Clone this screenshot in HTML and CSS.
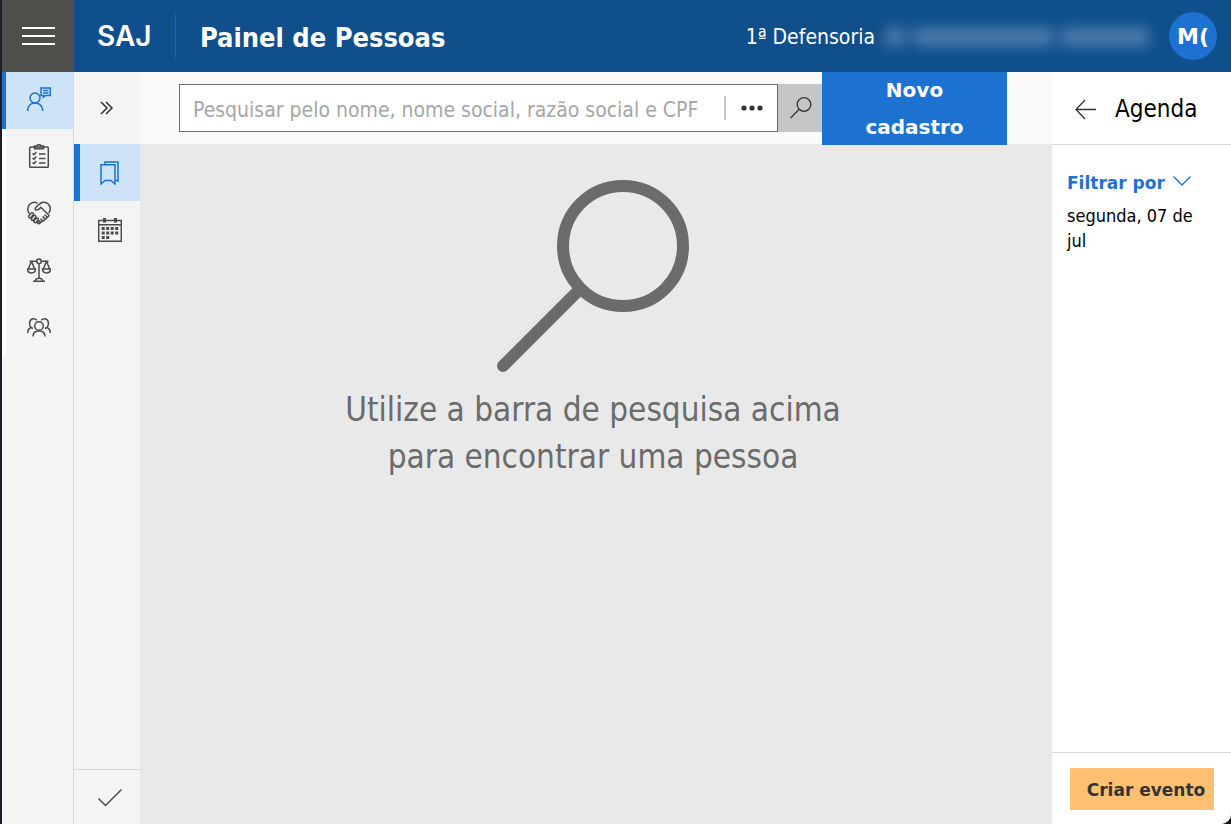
FILE: index.html
```html
<!DOCTYPE html>
<html lang="pt-BR">
<head>
    <meta charset="UTF-8">
    <meta name="viewport" content="width=device-width, initial-scale=1.0">
    <title>Painel de Pessoas</title>
    <link rel="stylesheet" href="styles.css">
</head>
<body>
    <div class="app">
        <header class="header">
            <button class="menu-button" type="button" aria-label="Menu">
                <svg width="34" height="20" viewBox="0 0 34 20" stroke="#fff" stroke-width="2"><path d="M1 2h33M1 10h33M1 18h33"/></svg>
            </button>
            <a class="logo" href="#">SAJ</a>
            <h1 class="title">Painel de Pessoas</h1>
            <div class="unit">
                <span>1ª Defensoria</span>
                <span class="redacted"><i class="short"></i><i class="long"></i><i class="medium"></i></span>
            </div>
            <button class="avatar" type="button">M(</button>
        </header>

        <div class="content">
            <nav class="rail">
                <a class="rail-item active" href="#" aria-label="Atendimento">
                    <svg class="icon" viewBox="0 0 24 24"><circle cx="8" cy="11" r="5"/><path d="M.7 24c0-5 3-8 7.300-8s7.800 3 7.800 8"/><path d="M14 1h9.300v7.500H18.500l-2 1.700V8.500H14zM16 3.500h5.500M16 6h5.500"/></svg>
                </a>
                <a class="rail-item" href="#" aria-label="Tarefas">
                    <svg class="icon" viewBox="0 0 24 24"><rect x="2.700" y="3" width="18.600" height="20.300" rx="1"/><path d="M7.500 2h2.500c.5-1.800 3.500-1.800 4 0h2.500v2.800h-9zM5.500 9.500l1.500 1.300L9.300 8M5.500 14l1.500 1.300 2.300-2.800M5.500 18.500L7 19.800 9.300 17M12 10h6.500M12 14.500h6.500M12 19h6.500"/></svg>
                </a>
                <a class="rail-item" href="#" aria-label="Acordos">
                    <svg class="icon" viewBox="0 0 24 24"><path d="M2.300 12.500C.3 10 .3 6 2.500 3.500 5 .8 8 .7 10.500 2.300M12.800 2.500C16 .7 19 .8 21.500 3.300c2.200 2.700 2.200 6.200.2 8.700M15 1.800c-2 .7-4 2.200-6 4.500-1.300 1.600-1 2.700.5 2.700 2 0 3-1.300 4.300-2.700l7.700 7.400c1 1.200-.6 2.800-2 1.800l-2-1.700M19.500 15.500c1 1.300-.6 3-2 1.900l-2-2M17.500 17.400c.8 1.600-.8 2.900-2.200 1.900l-1.800-1.600M15.300 19.300c.4 1.600-1.600 2.800-3.300 1.300"/><path d="M2 14.500l2-2.300c1.500-1.300 3.200.2 2.200 1.600l-2 2.500c-1.400 1.200-3.300-.3-2.200-1.800zM4.500 17.300l2-2.500c1.400-1.300 3.200.2 2.100 1.600l-1.900 2.500c-1.400 1.200-3.200-.2-2.200-1.600zM7.200 19.600l1.700-2c1.400-1.200 3.200.2 2.100 1.600l-1.600 2c-1.400 1.200-3.200-.2-2.200-1.600zM10.200 21.600l1.200-1.200c1.200-.8 2.800.3 1.900 1.500-.9 1.200-2.300 1.200-3.100-.3z"/></svg>
                </a>
                <a class="rail-item" href="#" aria-label="Processos">
                    <svg class="icon" viewBox="0 0 24 24"><circle cx="12" cy="3.200" r="2.300"/><path d="M2.500 3.200h7.200M14.300 3.200h7.200M12 5.500V20M6 23.300h12M8.500 23c0-3.700 7-3.700 7 0M4.500 3.200L1.300 11M4.500 3.200L7.700 11M.5 11h8c0 5.200-8 5.200-8 0zM19.500 3.200L16.300 11M19.500 3.200l3.200 7.800M15.500 11h8c0 5.200-8 5.200-8 0z"/></svg>
                </a>
                <a class="rail-item" href="#" aria-label="Pessoas">
                    <svg class="icon" viewBox="0 0 24 24"><circle cx="12" cy="11" r="4.300"/><path d="M6 21.500c0-3 2-5.500 6-5.500s6 2.500 6 5.500M.7 18c0-3 .8-4.300 3.300-5.500C1.500 9 2.500 3.700 6.300 3.700c1.700 0 2.700.6 3.500 1.600M23.300 18c0-3-.8-4.300-3.300-5.500 2.500-3.500 1.500-8.800-2.300-8.800-1.700 0-2.700.6-3.500 1.600M4 12.500l2 1M20 12.500l-2 1"/></svg>
                </a>
            </nav>

            <nav class="subnav">
                <button class="expand" type="button" aria-label="Expandir">
                    <svg class="icon" viewBox="0 0 24 24"><path d="M6 6l6 6-6 6M11 6l6 6-6 6"/></svg>
                </button>
                <a class="subnav-item active" href="#" aria-label="Marcadores">
                    <svg class="icon" viewBox="0 0 24 24"><path d="M3 3.700h14V23l-4-3.500H7L3 23zM7 3.500V1h13v19l-3-1"/></svg>
                </a>
                <a class="subnav-item" href="#" aria-label="Agenda">
                    <svg class="icon" viewBox="0 0 24 24"><path d="M.7 2.500h22.600v20.800H.7zM.7 6.700h22.600"/><path stroke-width="3" d="M6.500 0v4.500M17.500 0v4.500"/><path stroke-width="3" stroke-dasharray="3 1.500" d="M3.700 10.500h16.600M3.700 15h16.600M3.700 19.500h8"/></svg>
                </a>
                <button class="confirm" type="button" aria-label="Confirmar">
                    <svg class="icon" viewBox="0 0 24 24"><path d="M.5 13.500l7 7L23.500 4.500"/></svg>
                </button>
            </nav>

            <main class="main">
                <form class="toolbar">
                    <div class="search">
                        <input class="search-input" type="text" aria-label="Pesquisar" placeholder="Pesquisar pelo nome, nome social, razão social e CPF">
                        <button class="more" type="button" aria-label="Mais opções">
                            <svg width="22" height="6" viewBox="0 0 22 6" fill="#333"><circle cx="3" cy="3" r="2.600"/><circle cx="11" cy="3" r="2.600"/><circle cx="19" cy="3" r="2.600"/></svg>
                        </button>
                    </div>
                    <button class="search-button" type="button" aria-label="Buscar">
                        <svg class="icon thin" viewBox="0 0 24 24"><circle cx="16" cy="8.500" r="6.800"/><path d="M11 13.500L2.500 22"/></svg>
                    </button>
                    <button class="new-button" type="button">Novo cadastro</button>
                </form>
                <section class="empty">
                    <svg class="empty-icon" width="192" height="192" viewBox="0 0 192 192"><circle cx="126" cy="66" r="60"/><path d="M83 109L6 186"/></svg>
                    <p class="empty-text">Utilize a barra de pesquisa acima para encontrar uma pessoa</p>
                </section>
            </main>

            <aside class="agenda">
                <div class="agenda-header">
                    <button class="back" type="button" aria-label="Voltar">
                        <svg class="icon thin" viewBox="0 0 24 24"><path d="M22 12.500H2M11 3l-9 9.500 9 9.500"/></svg>
                    </button>
                    <h2 class="agenda-title">Agenda</h2>
                </div>
                <div class="agenda-body">
                    <button class="filter" type="button">Filtrar por
                        <svg width="18" height="10" viewBox="0 0 18 10"><path d="M.5 .5l8.500 8.500 8.500-8.500"/></svg>
                    </button>
                    <p class="date">segunda, 07 de jul</p>
                </div>
                <div class="agenda-footer">
                    <button class="create" type="button">Criar evento</button>
                </div>
            </aside>
        </div>
    </div>
</body>
</html>
```
FILE: styles.css
```css
* {
    box-sizing: border-box;
}
html {
    background-color: #111;
}
body {
    margin: 0;
    font-family: "DejaVu Sans Condensed", Tahoma, "Noto Sans", sans-serif;
    color: #000;
}
button {
    border: none;
    padding: 0;
    background: none;
    font-family: inherit;
    cursor: pointer;
}
h1, h2, p {
    margin: 0;
}
svg {
    display: block;
}
.app {
    display: flex;
    flex-direction: column;
    min-height: 100vh;
    border-left: 2px solid #1e1e28;
    border-bottom-right-radius: 10px;
    background-color: #fff;
    overflow: hidden;
}
.icon {
    width: 24px;
    height: 24px;
    fill: none;
    stroke: currentColor;
    stroke-width: 1.5;
}
.thin {
    stroke-width: 1.3;
}

/* header */
.header {
    display: flex;
    align-items: center;
    height: 72px;
    padding-right: 14px;
    background-color: #0f4f8c;
    color: #fff;
}
.menu-button {
    display: flex;
    align-items: center;
    justify-content: center;
    width: 72px;
    height: 72px;
    background-color: #4e4e4b;
}
.logo {
    width: 102px;
    padding-left: 23px;
    border-right: 1px solid #1c62b0;
    color: #fff;
    font-family: Inter, sans-serif;
    font-size: 28px;
    font-weight: 600;
    line-height: 44px;
    text-decoration: none;
}
.title {
    flex: 1;
    padding: 2px 0 0 24px;
    font-size: 27px;
    font-weight: bold;
}
.unit {
    display: flex;
    align-items: center;
    gap: 10px;
    padding-top: 2px;
    font-size: 21px;
}
.redacted {
    display: flex;
    gap: 8px;
    width: 284px;
    filter: blur(7px);
}
.redacted i {
    height: 18px;
    background-color: #4f7dac;
}
.short {
    width: 20px;
}
.long {
    width: 140px;
}
.medium {
    width: 88px;
}
.avatar {
    width: 48px;
    height: 48px;
    border-radius: 50%;
    background-color: #1d71d0;
    color: #fff;
    font-family: "DejaVu Sans", Verdana, sans-serif;
    font-size: 22px;
    font-weight: bold;
}

/* side navigation */
.content {
    display: flex;
    flex: 1;
}
.rail, .subnav {
    display: flex;
    flex-direction: column;
    background-color: #f4f4f4;
}
.rail {
    width: 72px;
    border-right: 1px solid #d6d6d6;
}
.rail-item, .subnav-item {
    display: flex;
    align-items: center;
    justify-content: center;
    height: 57px;
    color: #4a4a4a;
}
.rail-item {
    padding: 0 2px 4px 0;
    border-left: 4px solid #fff;
}
.subnav {
    width: 66px;
}
.subnav-item {
    border-left: 6px solid transparent;
}
.active {
    border-left-color: #1d71d0;
    background-color: #cce3f8;
    color: #1d71d0;
}
.expand {
    height: 72px;
    padding-left: 21px;
    color: #333;
}
.confirm {
    display: flex;
    align-items: center;
    justify-content: center;
    height: 55px;
    margin-top: auto;
    padding-left: 6px;
    border-top: 1px solid #d6d6d6;
    color: #4a4a4a;
}

/* search */
.main {
    display: flex;
    flex: 1;
    flex-direction: column;
    background-color: #e9e9e9;
}
.toolbar {
    display: flex;
    align-items: center;
    height: 72px;
    padding: 0 45px 0 39px;
    background-color: #fafafa;
}
.search {
    display: flex;
    flex: 1;
    align-items: center;
    height: 48px;
    border: 1px solid #6b6b6b;
    background-color: #fff;
}
.search-input {
    flex: 1;
    min-width: 0;
    padding: 3px 0 0 13px;
    border: none;
    outline: none;
    font-family: inherit;
    font-size: 21px;
}
.search-input::placeholder {
    color: #a6a6a6;
}
.more {
    display: flex;
    align-items: center;
    justify-content: center;
    width: 53px;
    height: 24px;
    border-left: 2px solid #c6c6c6;
}
.search-button {
    display: flex;
    align-items: center;
    justify-content: center;
    width: 44px;
    height: 48px;
    background-color: #c6c6c6;
    color: #333;
}
.new-button {
    width: 185px;
    height: 73px;
    padding: 0 36px;
    background-color: #1d71d0;
    color: #fff;
    font-family: "DejaVu Sans", Verdana, sans-serif;
    font-size: 20px;
    font-weight: bold;
    line-height: 37px;
}
.empty {
    display: flex;
    flex-direction: column;
    align-items: center;
    padding: 36px 6px 0 0;
    color: #6b6b6b;
}
.empty-icon {
    fill: none;
    stroke: currentColor;
    stroke-width: 12;
    stroke-linecap: round;
}
.empty-text {
    max-width: 520px;
    margin-top: 14px;
    font-size: 33px;
    line-height: 47px;
    text-align: center;
}

/* agenda */
.agenda {
    display: flex;
    flex-direction: column;
    width: 179px;
    background-color: #fff;
}
.agenda-header {
    display: flex;
    align-items: center;
    gap: 17px;
    height: 73px;
    padding: 2px 0 0 22px;
    border-bottom: 1px solid #d6d6d6;
}
.back {
    color: #333;
}
.agenda-title {
    font-size: 24px;
    font-weight: normal;
}
.agenda-body {
    flex: 1;
    padding: 24px 15px;
}
.filter {
    display: flex;
    align-items: center;
    gap: 8px;
    color: #1d71d0;
    font-family: "DejaVu Sans", Verdana, sans-serif;
    font-size: 17px;
    font-weight: bold;
    line-height: 28px;
}
.filter svg {
    margin-bottom: 4px;
    fill: none;
    stroke: currentColor;
    stroke-width: 1.4;
}
.date {
    margin-top: 6px;
    font-size: 18px;
    line-height: 25px;
}
.agenda-footer {
    display: flex;
    height: 72px;
    padding: 15px 17px 14px 18px;
    border-top: 1px solid #d6d6d6;
}
.create {
    flex: 1;
    padding: 2px 0 0 8px;
    background-color: #ffc072;
    color: #333;
    font-family: "DejaVu Sans", Verdana, sans-serif;
    font-size: 17px;
    font-weight: bold;
}
```
